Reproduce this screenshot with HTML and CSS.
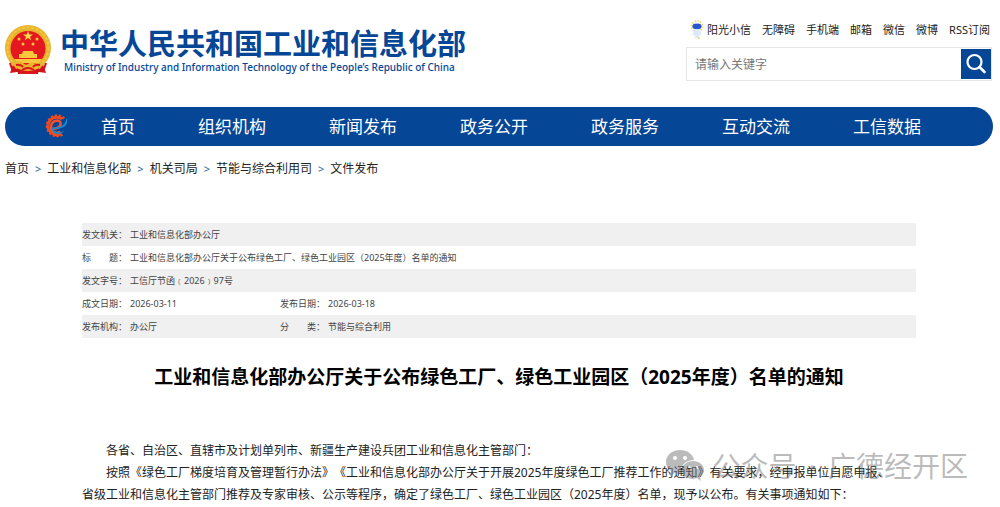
FILE: index.html
```html
<!DOCTYPE html>
<html lang="zh-CN">
<head>
<meta charset="utf-8">
<meta name="viewport" content="width=device-width, initial-scale=1">
<title>工业和信息化部办公厅关于公布绿色工厂、绿色工业园区（2025年度）名单的通知</title>
<link rel="stylesheet" href="styles.css">
</head>
<body>
<header class="header">
  <a class="brand" href="#">
    <svg class="emblem" viewBox="0 0 46 50" aria-hidden="true">
      <path d="M9 36 5 48l7-1 4 2h14l4-2 7 1-4-12z" fill="#d9161c"/>
      <circle cx="23" cy="23" r="23" fill="#e9b42c"/>
      <circle cx="23" cy="23" r="20.500" fill="none" stroke="#f0c645" stroke-width="2" stroke-dasharray="3 1.500"/>
      <circle cx="23" cy="23.500" r="17.500" fill="#e5181f"/>
      <path d="m23 6 1.300 3.500h3.700l-3 2.200 1.200 3.600-3.200-2.200-3.200 2.200 1.200-3.600-3-2.200h3.700z" fill="#fbdc4a"/>
      <g fill="#f7c83c"><circle cx="14" cy="14" r="1.500"/><circle cx="32" cy="14" r="1.500"/><circle cx="18" cy="19" r="1.500"/><circle cx="28" cy="19" r="1.500"/>
      <path d="M18 26h10l1 3h3v4H14v-4h3zM9 34h28l-3 4H12z"/></g>
      <path d="M8 37q7-2 10 1t5 1 5-1 10-1l-3 7q-6-3-9 0t-7 0-8 0z" fill="#e9b42c"/>
      <path d="M11 40q5-1 7 2m17-2q-5-1-7 2M17 45q6-4 12 0" fill="none" stroke="#d9161c" stroke-width="2"/>
      <path d="m5 38 2 6 7 2v3M41 38l-2 6-7 2v3" fill="none" stroke="#c9141b" stroke-width="2"/>
    </svg>
    <span class="brand-text">
      <span class="brand-name">中华人民共和国工业和信息化部</span>
      <span class="brand-en">Ministry of Industry and Information Technology of the People’s Republic of China</span>
    </span>
  </a>
  <div class="tools">
    <nav class="links" aria-label="快捷入口">
      <a class="assistant" href="#"><svg class="mascot" viewBox="0 0 14 22" aria-hidden="true">
        <circle cx="7" cy="7" r="6" fill="none" stroke="#f5d66b" stroke-width="2" stroke-dasharray="1.500 1.600"/>
        <path d="M4 9h6l2 8-2-1-1 4H5l-1-4-2 1z" fill="#dce9f8"/>
        <circle cx="7" cy="7" r="4.500" fill="#dce9fb"/><rect x="2" y="4" width="10" height="6" rx="3" fill="#2854d0"/>
        <circle cx="9" cy="20" r="1" fill="#f3cf58"/></svg>阳光小信</a>
      <a href="#">无障碍</a><a href="#">手机端</a><a href="#">邮箱</a><a href="#">微信</a><a href="#">微博</a><a href="#">RSS订阅</a>
    </nav>
    <form class="search">
      <input class="search-input" type="text" placeholder="请输入关键字" aria-label="请输入关键字">
      <button class="search-button" type="button" aria-label="搜索"><svg viewBox="0 0 30 30" aria-hidden="true"><circle cx="13.500" cy="13" r="7" fill="none" stroke="#fff" stroke-width="2.200"/><path d="m18.500 18 5 5" stroke="#fff" stroke-width="2.600" stroke-linecap="round"/></svg></button>
    </form>
  </div>
</header>

<nav class="nav" aria-label="主导航">
  <svg class="nav-logo" viewBox="0 0 26 26" aria-hidden="true">
    <path d="M21 5.500A10 10 0 1 0 20 21" fill="none" stroke="#ee4a1d" stroke-width="3" stroke-dasharray="2.200 1.600"/>
    <path d="M19 6A8.700 8.700 0 1 0 18 20.500" fill="none" stroke="#ee4a1d" stroke-width="3"/>
    <path d="M8 15.500c7 1 10-2 9.500-5.500-.5-4-8.500-3-9.500 3-.8 6 5 8 9.500 6" fill="none" stroke="#f2502a" stroke-width="2.600"/>
    <path d="M23.500 5c3 6-3 12-13 11 1 4 7 4.500 11 1.500-4 5.500-12.500 5-13-3C17 15 23 12 23.500 5z" fill="#1688d4"/>
  </svg>
  <a href="#">首页</a><a href="#">组织机构</a><a href="#">新闻发布</a><a href="#">政务公开</a><a href="#">政务服务</a><a href="#">互动交流</a><a href="#">工信数据</a>
</nav>

<nav class="crumbs" aria-label="当前位置">
  <a href="#">首页</a><span class="sep">&gt;</span><a href="#">工业和信息化部</a><span class="sep">&gt;</span><a href="#">机关司局</a><span class="sep">&gt;</span><a href="#">节能与综合利用司</a><span class="sep">&gt;</span><a href="#">文件发布</a>
</nav>

<main class="article">
  <table class="meta">
    <colgroup><col class="col-label"><col class="col-value"><col class="col-label"><col></colgroup>
    <tr><th scope="row">发文机关：</th><td colspan="3">工业和信息化部办公厅</td></tr>
    <tr><th scope="row">标　　题：</th><td colspan="3">工业和信息化部办公厅关于公布绿色工厂、绿色工业园区（2025年度）名单的通知</td></tr>
    <tr><th scope="row">发文字号：</th><td colspan="3">工信厅节函﹝2026﹞97号</td></tr>
    <tr><th scope="row">成文日期：</th><td>2026-03-11</td><th scope="row">发布日期：</th><td>2026-03-18</td></tr>
    <tr><th scope="row">发布机构：</th><td>办公厅</td><th scope="row">分　　类：</th><td>节能与综合利用</td></tr>
  </table>
  <h1 class="title">工业和信息化部办公厅关于公布绿色工厂、绿色工业园区（2025年度）名单的通知</h1>
  <div class="content">
    <p>各省、自治区、直辖市及计划单列市、新疆生产建设兵团工业和信息化主管部门：</p>
    <p>按照《绿色工厂梯度培育及管理暂行办法》《工业和信息化部办公厅关于开展2025年度绿色工厂推荐工作的通知》有关要求，经申报单位自愿申报、<br>省级工业和信息化主管部门推荐及专家审核、公示等程序，确定了绿色工厂、绿色工业园区（2025年度）名单，现予以公布。有关事项通知如下：</p>
    <div class="watermark">
      <svg class="wechat" viewBox="0 0 38 32" aria-hidden="true">
        <path fill-rule="evenodd" d="M14 0C6 0 0 5 0 12c0 4 2 7 5 9l-1 5 5-3 6 1c-2-7 4-14 13-14C27 4 21 0 14 0zM9 6a2 2 0 1 1 0 4 2 2 0 0 1 0-4zm10 0a2 2 0 1 1 0 4 2 2 0 0 1 0-4z"/>
        <path fill-rule="evenodd" d="M27 11c-6 0-11 4-11 9s5 9 11 9l4-1 4 3-1-4c2-2 4-4 4-7 0-5-5-9-11-9zm-4 5a1.600 1.600 0 1 1 0 3.200 1.600 1.600 0 0 1 0-3.200zm8 0a1.600 1.600 0 1 1 0 3.200 1.600 1.600 0 0 1 0-3.200z"/>
      </svg>
      <span>公众号</span>
      <span class="dot">·</span>
      <span>广德经开区</span>
    </div>
  </div>
</main>
</body>
</html>
```
FILE: styles.css
```css
* { box-sizing: border-box; }
body {
  margin: 0;
  background: #fff;
  color: #222;
  font-family: "Noto Sans", "Noto Sans CJK SC", sans-serif;
  font-size: 12px;
  text-spacing-trim: space-all;
}
a { color: inherit; text-decoration: none; }

.header {
  display: flex;
  justify-content: space-between;
  align-items: flex-start;
  padding: 20px 8px 0 5px;
}
.brand { display: flex; gap: 9px; padding-top: 5px; color: #054696; }
.emblem { width: 46px; height: 50px; flex: none; }
.brand-text { display: flex; flex-direction: column; white-space: nowrap; }
.brand-name {
  font: bold 29px/35px "Noto Sans CJK SC", sans-serif;
}
.brand-en { font: 500 10px/14px "Noto Sans", sans-serif; padding-left: 4px; }

.tools { width: 306px; }
.links {
  display: flex;
  justify-content: flex-end;
  gap: 11px;
  padding-right: 2px;
  font-size: 11px;
  line-height: 20px;
  white-space: nowrap;
}
.assistant { display: flex; gap: 3px; }
.mascot { width: 14px; height: 20px; }
.search {
  display: flex;
  align-items: center;
  margin-top: 7px;
  height: 34px;
  border: 1px solid #e6e6e6;
}
.search-input {
  flex: 1;
  min-width: 0;
  padding: 0 8px;
  border: 0;
  outline: 0;
  background: none;
  font: inherit;
}
.search-input::placeholder { color: #777; opacity: 1; }
.search-button {
  width: 30px;
  height: 30px;
  padding: 0;
  border: 0;
  background: #054696;
}
.search-button svg { display: block; }

.nav {
  display: flex;
  align-items: center;
  gap: 63px;
  height: 39px;
  margin: 26px 7px 0 5px;
  padding: 0 0 2px 38px;
  border-radius: 20px;
  background: #054696;
  color: #fff;
  font-size: 17px;
  white-space: nowrap;
}
.nav-logo { width: 26px; height: 26px; margin-right: -31px; flex: none; }

.crumbs {
  display: flex;
  gap: 6px;
  padding: 14px 5px 0;
  line-height: 18px;
}
.sep { color: #1e62a8; font-size: 11px; }

.article { padding: 45px 84px 0 82px; }
.meta {
  width: 100%;
  border-collapse: collapse;
  table-layout: fixed;
  color: #444;
  font-size: 9px;
  line-height: 23px;
}
.col-label { width: 48px; }
.col-value { width: 150px; }
.meta th, .meta td { padding: 0; text-align: left; font-weight: normal; white-space: nowrap; }
.meta tr:nth-child(odd) { background: #f0f0f0; }
.title {
  margin: 25px 0 0;
  color: #000;
  font-size: 19px;
  line-height: 28px;
  text-align: center;
  white-space: nowrap;
}
.content { position: relative; margin-top: 49px; line-height: 22px; }
.content p { margin: 0; text-indent: 2em; white-space: nowrap; }
.watermark {
  position: absolute;
  top: 8px;
  right: -52px;
  display: flex;
  align-items: center;
  gap: 12px;
  color: rgba(120, 120, 120, 0.5);
  font-size: 28px;
  line-height: 36px;
  white-space: nowrap;
}
.wechat { width: 38px; height: 32px; margin-right: -4px; fill: currentColor; }
```
